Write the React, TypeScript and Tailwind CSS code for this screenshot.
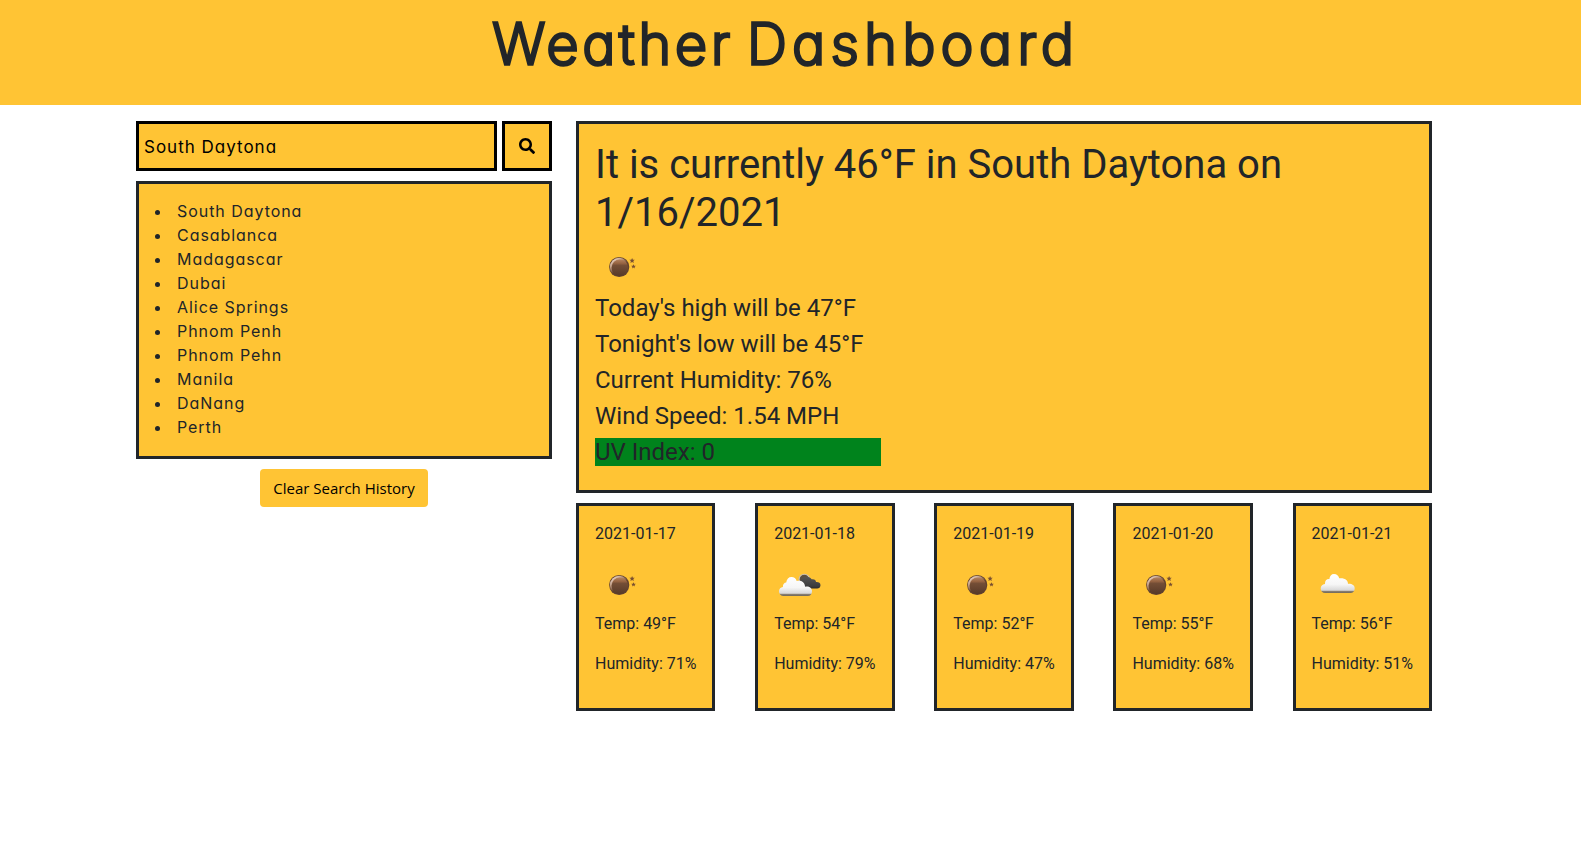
import { FaSearch } from "react-icons/fa";

type Sky = "clear-night" | "scattered" | "broken";

const history = [
  "South Daytona",
  "Casablanca",
  "Madagascar",
  "Dubai",
  "Alice Springs",
  "Phnom Penh",
  "Phnom Pehn",
  "Manila",
  "DaNang",
  "Perth",
];

const conditions = [
  "Today's high will be 47°F",
  "Tonight's low will be 45°F",
  "Current Humidity: 76%",
  "Wind Speed: 1.54 MPH",
];

const forecast: { date: string; sky: Sky; temp: number; humidity: number }[] = [
  { date: "2021-01-17", sky: "clear-night", temp: 49, humidity: 71 },
  { date: "2021-01-18", sky: "broken", temp: 54, humidity: 79 },
  { date: "2021-01-19", sky: "clear-night", temp: 52, humidity: 47 },
  { date: "2021-01-20", sky: "clear-night", temp: 55, humidity: 68 },
  { date: "2021-01-21", sky: "scattered", temp: 56, humidity: 51 },
];

function SkyIcon({ sky, id }: { sky: Sky; id: string }) {
  return (
    <svg width="50" height="50" viewBox="0 0 50 50" className="block">
      <defs>
        <linearGradient id={`${id}-moon`} x1="0" y1="0" x2="0" y2="1">
          <stop offset="0" stopColor="#b5835f" />
          <stop offset="0.25" stopColor="#946241" />
          <stop offset="0.36" stopColor="#744e36" />
          <stop offset="1" stopColor="#573a29" />
        </linearGradient>
        <linearGradient id={`${id}-rim`} x1="0.15" y1="0.1" x2="0.75" y2="0.9">
          <stop offset="0" stopColor="#ecd5c6" />
          <stop offset="0.35" stopColor="#b08a70" />
          <stop offset="0.6" stopColor="#5d3e2b" />
        </linearGradient>
        <linearGradient id={`${id}-cloud`} x1="0" y1="0" x2="0" y2="1">
          <stop offset="0" stopColor="#ffffff" />
          <stop offset="0.55" stopColor="#f6f6f6" />
          <stop offset="0.86" stopColor="#d8d8d8" />
          <stop offset="0.9" stopColor="#8b8275" />
          <stop offset="1" stopColor="#6f6759" />
        </linearGradient>
        <linearGradient id={`${id}-dark`} x1="0" y1="0" x2="0" y2="1">
          <stop offset="0" stopColor="#555555" />
          <stop offset="0.8" stopColor="#3c3c3c" />
          <stop offset="1" stopColor="#2b2b2b" />
        </linearGradient>
      </defs>
      {sky === "clear-night" && (
        <>
          <circle cx="24.2" cy="23" r="10.1" fill="#644430" />
          <circle cx="24.2" cy="23" r="9.300" fill={`url(#${id}-rim)`} />
          <circle cx="24.900" cy="23.700" r="8.300" fill={`url(#${id}-moon)`} />
          <path d="M37.1 13.900l.8 1.8 1.900.1-1.500 1.200.5 1.900-1.700-1-1.700 1 .5-1.900-1.500-1.200 1.900-.1z" fill="#7a5030" />
          <path d="M38.5 20.200l.7 1.500 1.600.1-1.200 1.100.3 1.600-1.400-.9-1.400.9.3-1.600-1.200-1.100 1.600-.1z" fill="#7a5030" />
        </>
      )}
      {sky === "scattered" && (
        <path
          d="M13.2 31C10.500 31 8.700 29 8.700 26.400c0-2.300 1.600-4.200 4.300-4.500-.3-3.500 1.900-5.200 4.400-4.900C17.700 14 19.300 12 22 12c2.800 0 4.600 1.700 5.200 4.300 2.800-.3 5.400 0 7.400 2 1 1.100 1.300 2.200 1.400 3.600 3.700-.3 6.700 1.400 6.700 4.500 0 2.700-1.700 4.600-4.200 4.600z"
          fill={`url(#${id}-cloud)`}
        />
      )}
      {sky === "broken" && (
        <>
          <circle cx="30.3" cy="17.400" r="5.200" fill="#5a4f42" stroke="#c9c0b2" strokeWidth="1.100" />
          <path
            d="M27 24c-1.500-5.600 1.500-9.500 5-8.700 2.500-.9 4.900.2 5.600 2 2.700-.5 4.400.7 4.400 2.800 2.600-.3 4.500 1 4.500 3.100 0 2-1.400 3.300-3.400 3.300H31z"
            fill={`url(#${id}-dark)`}
          />
          <path
            d="M9.500 34C7 34 5 32 5 29.400c0-2.400 1.700-4 3.900-4.300-.2-3 1.600-4.500 3.300-4.500C12.700 17 14.600 15 17.500 15c2.600 0 4.500 1.600 5.200 4 4.400-.8 8 1.100 8.400 5.700 4-.7 6.900 1.100 6.900 4.500 0 2.800-1.600 4.800-4.200 4.800z"
            fill={`url(#${id}-cloud)`}
          />
        </>
      )}
    </svg>
  );
}

export default function App() {
  return (
    <div className="min-h-[861px] bg-white font-[Roboto,sans-serif] text-base text-[#212529]">
      <header className="flex h-[105px] justify-center bg-[#ffc434] pr-[9px]">
        <h1 className="whitespace-nowrap pt-[8px] font-[Inter,sans-serif] text-[55.500px] leading-[72px] font-extralight tracking-[4.100px] [word-spacing:-7px] [-webkit-text-stroke:3.300px_#212529] [stroke-linejoin:round] [font-feature-settings:'cv11']">
          Weather <span className="tracking-[5.600px]">Dashboard</span>
        </h1>
      </header>

      <main className="flex gap-6 pt-4 pl-[136px]">
        <aside className="flex w-[416px] flex-col">
          <form className="flex gap-[5px]" onSubmit={(e) => e.preventDefault()}>
            <input
              aria-label="City"
              defaultValue="South Daytona"
              className="h-[50px] w-[361px] border-[3px] border-black bg-[#ffc434] px-[5px] pt-px font-[Inter,sans-serif] text-[17px] tracking-[1px] text-black outline-none [font-feature-settings:'cv11']"
            />
            <button
              type="submit"
              aria-label="Search"
              className="flex size-[50px] items-center justify-center border-[3px] border-black bg-[#ffc434] text-black"
            >
              <FaSearch size={16} />
            </button>
          </form>

          <ul className="mt-[10px] list-inside list-disc border-[3px] border-[#212529] bg-[#ffc434] px-4 pt-[15px] pb-[17px] font-[Inter,sans-serif] text-base leading-6 [font-feature-settings:'cv11']">
            {history.map((city) => (
              <li key={city}>
                <span className="tracking-[0.950px]">{city}</span>
              </li>
            ))}
          </ul>

          <button
            type="button"
            className="mt-[10px] h-[38px] w-[168px] self-center rounded bg-[#ffc434] font-['Open_Sans',sans-serif] text-[15px] whitespace-nowrap text-black"
          >
            Clear Search History
          </button>
        </aside>

        <section className="w-[856px]">
          <div className="border-[3px] border-[#212529] bg-[#ffc434] px-4 pt-[17px] pb-4">
            <h2 className="mb-[7px] text-[40px] leading-[48px]">
              It is currently 46°F in South Daytona on 1/16/2021
            </h2>
            <SkyIcon sky="clear-night" id="today" />
            {conditions.map((line) => (
              <p key={line} className="mb-2 text-[24px] leading-7">
                {line}
              </p>
            ))}
            <p className="mb-2 w-[286px] bg-[#00831c] text-[24px] leading-7">UV Index: 0</p>
          </div>

          <div className="mt-[10px] flex justify-between">
            {forecast.map((day) => (
              <article
                key={day.date}
                className="h-[208px] w-[139.400px] border-[3px] border-[#212529] bg-[#ffc434] p-4 whitespace-nowrap"
              >
                <p className="mb-4">{day.date}</p>
                <SkyIcon sky={day.sky} id={day.date} />
                <p className="mb-4">Temp: {day.temp}°F</p>
                <p>Humidity: {day.humidity}%</p>
              </article>
            ))}
          </div>
        </section>
      </main>
    </div>
  );
}
